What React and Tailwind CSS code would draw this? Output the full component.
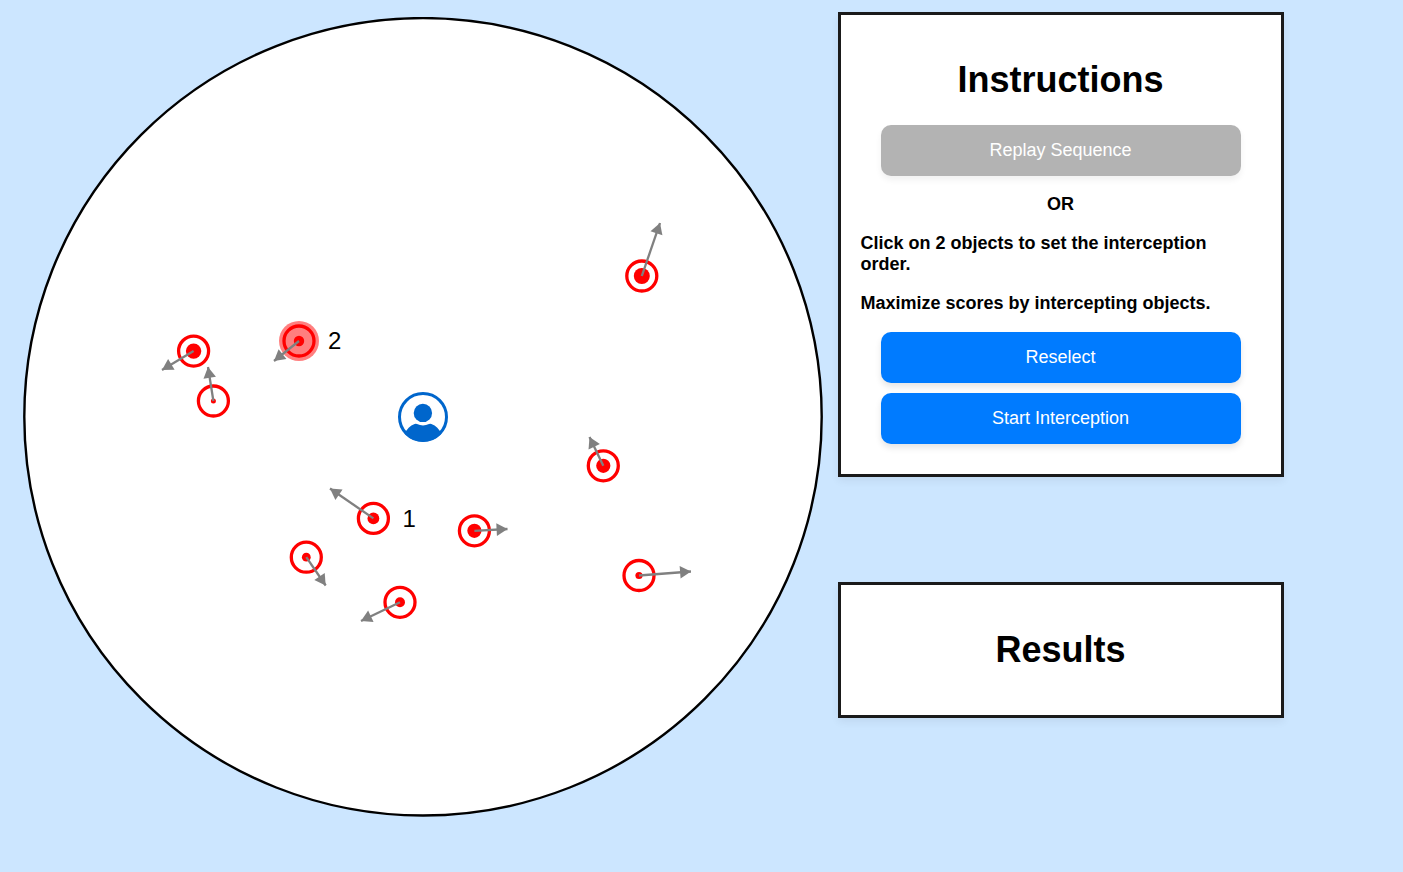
const targets = [
  { x: 641.8, y: 276, r: 8, tip: [660, 223] },
  { x: 193.6, y: 351.1, r: 7.7, tip: [162, 370] },
  { x: 213.4, y: 401, r: 2.5, tip: [208, 367] },
  { x: 299, y: 341, r: 5.2, tip: [274, 361], selected: true, label: "2" },
  { x: 373.4, y: 518.4, r: 5.9, tip: [330, 488.5], label: "1" },
  { x: 474.4, y: 530.8, r: 7.1, tip: [507.5, 529] },
  { x: 306.3, y: 557.2, r: 4.4, tip: [325.7, 585.5] },
  { x: 400, y: 602.3, r: 5, tip: [361, 621] },
  { x: 603.3, y: 465.8, r: 7.1, tip: [589.5, 437] },
  { x: 639, y: 575.5, r: 3.6, tip: [691, 571.5] },
];

function Target({ x, y, r, tip, selected, label }) {
  const angle = Math.atan2(tip[1] - y, tip[0] - x);
  const wing = (turn) =>
    `${tip[0] - 12.6 * Math.cos(angle + turn)},${tip[1] - 12.6 * Math.sin(angle + turn)}`;
  return (
    <g>
      <circle cx={x} cy={y} r="15" fill="white" stroke="red" strokeWidth="3.3" />
      <circle cx={x} cy={y} r={r} fill="red" />
      {selected && <circle cx={x} cy={y} r="20" fill="red" fillOpacity="0.5" />}
      <line x1={x} y1={y} x2={tip[0]} y2={tip[1]} stroke="gray" strokeWidth="2.3" />
      <polygon points={`${tip[0]},${tip[1]} ${wing(Math.PI / 6)} ${wing(-Math.PI / 6)}`} fill="gray" />
      {label && (
        <text x={x + 29} y={y + 8.2} className="text-[24px]" fill="black">
          {label}
        </text>
      )}
    </g>
  );
}

function Player() {
  return (
    <g fill="#0066cc">
      <clipPath id="player-ring">
        <circle cx="423" cy="417" r="24.7" />
      </clipPath>
      <circle cx="423" cy="417" r="23.5" fill="white" stroke="#0066cc" strokeWidth="3" />
      <circle cx="422.9" cy="412.9" r="9.2" />
      <path
        clipPath="url(#player-ring)"
        d="M404 434 C407 429 410 425.5 414.6 423.9 Q415.8 423.4 417 424 Q423 426.8 429 424 Q430.2 423.4 431.4 423.9 C436 425.5 439 429 442 434 V443 H404 Z"
      />
    </g>
  );
}

function Panel({ title, children }) {
  return (
    <section className="w-full border-[3px] border-[#1a1a1a] bg-white p-5 shadow-[0_4px_8px_rgba(0,0,0,0.06)]">
      <h1 className="my-6 pr-px text-center text-[36px] leading-[42px] font-bold">{title}</h1>
      {children}
    </section>
  );
}

function Button({ children, disabled }) {
  return (
    <button
      disabled={disabled}
      className={`${disabled ? "bg-[#b3b3b3] shadow-[0_4px_6px_rgba(0,0,0,0.06)]" : "bg-[#007bff] shadow-[0_4px_6px_rgba(0,0,0,0.1)]"} h-[51px] w-[360px] rounded-[10px] pr-px pb-px text-[18px] leading-[21px] text-white`}
    >
      {children}
    </button>
  );
}

export default function App() {
  return (
    <main className="flex h-screen items-start gap-[15px] overflow-hidden bg-[#cce6ff] pl-[23px] font-['Liberation_Sans',Arial,sans-serif] text-[18px] leading-[21px] text-black">
      <svg className="mt-[17px] h-[800px] w-[800px] shrink-0" viewBox="23 17 800 800">
        <circle cx="423" cy="416.8" r="398.7" fill="white" stroke="black" strokeWidth="2.4" />
        <Player />
        {targets.map((target) => (
          <Target key={`${target.x}-${target.y}`} {...target} />
        ))}
      </svg>
      <aside className="mt-3 flex w-[446px] flex-col gap-[105px]">
        <Panel title="Instructions">
          <div className="flex flex-col items-center">
            <Button disabled>Replay Sequence</Button>
            <p className="my-[18px] pr-px font-bold">OR</p>
            <p className="-ml-px w-full font-bold">Click on 2 objects to set the interception order.</p>
            <p className="my-[18px] -ml-px w-full font-bold">Maximize scores by intercepting objects.</p>
            <div className="mb-2.5 flex flex-col gap-2.5">
              <Button>Reselect</Button>
              <Button>Start Interception</Button>
            </div>
          </div>
        </Panel>
        <Panel title="Results" />
      </aside>
    </main>
  );
}
